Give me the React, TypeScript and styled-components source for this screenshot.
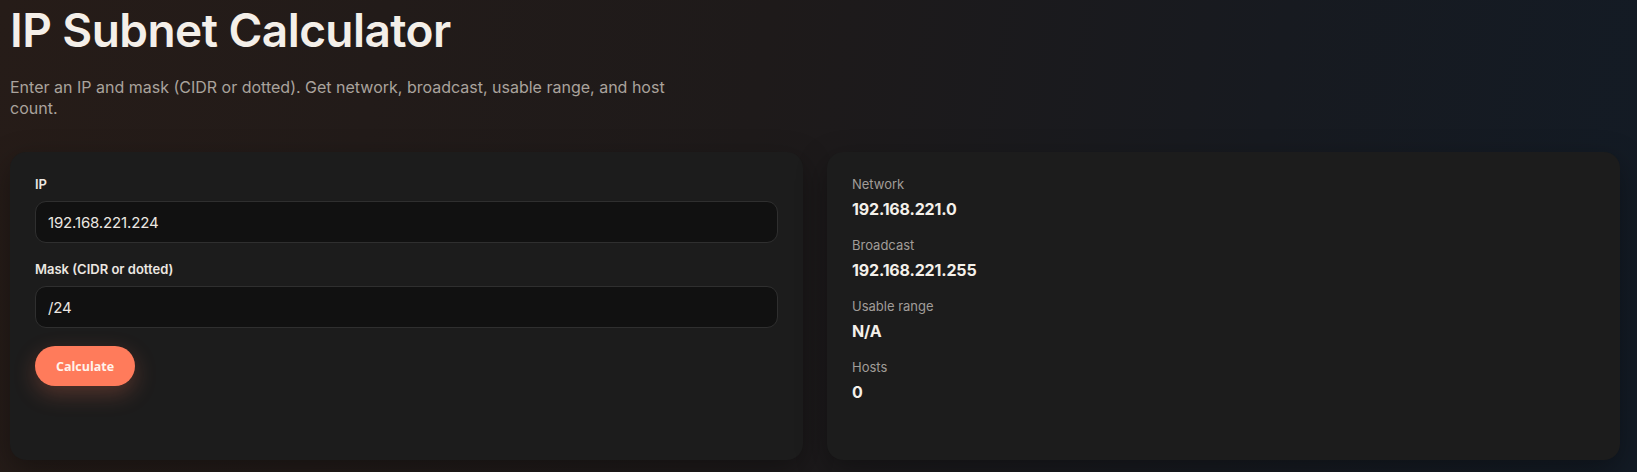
import React, { useState } from "react";
import styled, { createGlobalStyle } from "styled-components";

const GlobalStyle = createGlobalStyle`
  html, body {
    margin: 0;
    padding: 0;
  }
  body {
    min-height: 100vh;
    background: linear-gradient(100deg, #261c18 0%, #1e1a1a 45%, #171a20 75%, #131b25 100%);
    font-family: Inter, "Noto Sans", sans-serif;
    color: #f3eee8;
  }
`;

// ip helpers
const toInt = (ip: string) => {
  const parts = ip.trim().split(".").map((p) => Number(p));
  if (parts.length !== 4 || parts.some((p) => isNaN(p) || p < 0 || p > 255)) return null;
  return ((parts[0] << 24) | (parts[1] << 16) | (parts[2] << 8) | parts[3]) >>> 0;
};
const toIp = (n: number) =>
  [(n >>> 24) & 255, (n >>> 16) & 255, (n >>> 8) & 255, n & 255].join(".");

const parseMask = (mask: string) => {
  const m = mask.trim();
  if (m.startsWith("/")) {
    const bits = Number(m.slice(1));
    if (isNaN(bits) || bits < 0 || bits > 32) return null;
    return bits === 0 ? 0 : (0xffffffff << (32 - bits)) >>> 0;
  }
  return toInt(m);
};

function App() {
  const [ip, setIp] = useState("192.168.221.224");
  const [mask, setMask] = useState("/24");
  const [result, setResult] = useState({
    network: "192.168.221.0",
    broadcast: "192.168.221.255",
    range: "N/A",
    hosts: "0",
  });

  //계산 버튼
  const onCalculate = () => {
    const addr = toInt(ip);
    const m = parseMask(mask);
    if (addr === null || m === null) return;
    const net = (addr & m) >>> 0;
    const bc = (net | (~m >>> 0)) >>> 0;
    setResult({
      network: toIp(net),
      broadcast: toIp(bc),
      range: "N/A",
      hosts: "0",
    });
  };

  return (
    <>
      <GlobalStyle />
      <Page>
        <Intro>
          <Title>IP Subnet Calculator</Title>
          <Subtitle>
            Enter an IP and mask (CIDR or dotted). Get network, broadcast, usable range, and host
            count.
          </Subtitle>
        </Intro>
        <Grid>
          {/* 입력 카드 */}
          <Card>
            <Field>
              <Label>IP</Label>
              <Input value={ip} onChange={(e) => setIp(e.target.value)} />
            </Field>
            <Field>
              <Label>Mask (CIDR or dotted)</Label>
              <Input value={mask} onChange={(e) => setMask(e.target.value)} />
            </Field>
            <Button onClick={onCalculate}>Calculate</Button>
          </Card>
          {/* 결과 카드 */}
          <Card>
            <Stat>
              <StatLabel>Network</StatLabel>
              <StatValue>{result.network}</StatValue>
            </Stat>
            <Stat>
              <StatLabel>Broadcast</StatLabel>
              <StatValue>{result.broadcast}</StatValue>
            </Stat>
            <Stat>
              <StatLabel>Usable range</StatLabel>
              <StatValue>{result.range}</StatValue>
            </Stat>
            <Stat>
              <StatLabel>Hosts</StatLabel>
              <StatValue>{result.hosts}</StatValue>
            </Stat>
          </Card>
        </Grid>
      </Page>
    </>
  );
}

export default App;

const Page = styled.div`
  padding: 3px 17px 0 10px;
`;

const Intro = styled.div`
  max-width: 672px;
`;

const Title = styled.h1`
  margin: 0;
  font-size: 46px;
  line-height: 55px;
  font-weight: 600;
  letter-spacing: -0.012em;
  color: #f4efe9;
`;

const Subtitle = styled.p`
  margin: 19px 0 0;
  font-size: 16px;
  line-height: 21px;
  color: #aaa39d;
`;

const Grid = styled.div`
  display: grid;
  grid-template-columns: 1fr 1fr;
  gap: 24px;
  margin-top: 33px;
`;

const Card = styled.div`
  display: flex;
  flex-direction: column;
  min-height: 308px;
  box-sizing: border-box;
  padding: 23px 25px 24px;
  background: #1c1c1c;
  border-radius: 16px;
  box-shadow: 0 10px 30px rgba(0, 0, 0, 0.35);
`;

const Field = styled.div`
  display: flex;
  flex-direction: column;
  gap: 8px;
  margin-bottom: 17px;
`;

const Label = styled.label`
  font-size: 13px;
  line-height: 18px;
  font-weight: 600;
  color: #ece7e1;
`;

const Input = styled.input`
  height: 42px;
  box-sizing: border-box;
  padding: 0 12px;
  background: #111111;
  border: 1px solid #2f2f2f;
  border-radius: 11px;
  color: #ece7e1;
  font-family: Inter, "Noto Sans", sans-serif;
  font-size: 15px;
  letter-spacing: -0.01em;
  outline: none;
`;

const Button = styled.button`
  align-self: flex-start;
  width: 100px;
  height: 40px;
  margin-top: 1px;
  border: none;
  border-radius: 20px;
  background: #ff7b5b;
  color: #fff3ec;
  font-family: "Open Sans", "Noto Sans", sans-serif;
  font-size: 12.5px;
  font-weight: 700;
  cursor: pointer;
  box-shadow: 0 8px 22px rgba(255, 123, 91, 0.25);
`;

const Stat = styled.div`
  display: flex;
  flex-direction: column;
  gap: 5px;
  margin-bottom: 16px;
`;

const StatLabel = styled.span`
  font-size: 13px;
  line-height: 18px;
  color: #a19d99;
`;

const StatValue = styled.span`
  font-size: 16px;
  line-height: 22px;
  font-weight: 700;
  color: #f4f0ea;
  letter-spacing: -0.01em;
`;
